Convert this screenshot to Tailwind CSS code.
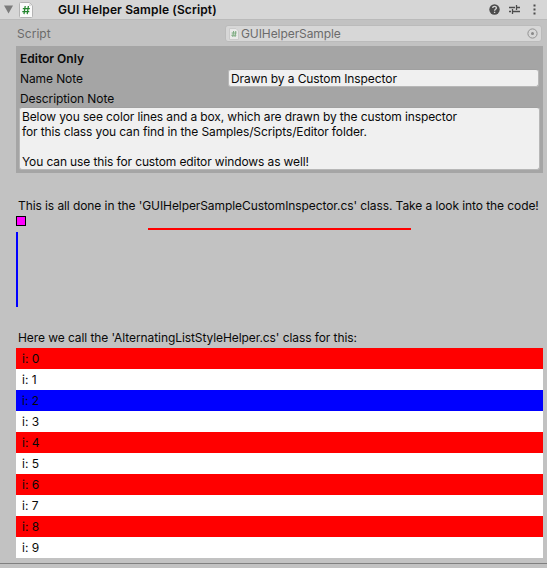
<!DOCTYPE html>
<html lang="en">
<head>
<meta charset="utf-8">
<title>Inspector</title>
<script src="https://cdn.jsdelivr.net/npm/@tailwindcss/browser@4"></script>
</head>
<body class="w-[547px] h-[568px] overflow-hidden bg-[#c2c2c2] font-['Inter',sans-serif] text-[12px] leading-[15px] text-[#090909] flex flex-col whitespace-nowrap">
<header class="h-5 shrink-0 bg-[#d6d6d6] border-b border-[#bababa] flex items-center pl-1 pr-[10px]">
  <svg class="w-[9px] h-[9px]" viewBox="0 0 9 9"><path d="M0 .5h9L4.5 8.5z" fill="#7c7c7c"/></svg>
  <svg class="w-[14px] h-4 ml-[6px]" viewBox="0 0 14 16"><path d="M1.5.5h8.8l3.2 3.2v10.8a1 1 0 0 1-1 1h-11a1 1 0 0 1-1-1v-13a1 1 0 0 1 1-1z" fill="#fbfbfb" stroke="#b4b4b4"/><path d="M10 1v3h3" fill="#ddd"/><path d="M6.2 4 5 12.2M9.4 4 8.2 12.2M3.8 6.6h7M3.3 9.7h7" stroke="#23852d" stroke-width="1.25" fill="none"/></svg>
  <h1 class="ml-[25px] font-semibold tracking-[0.13px]">GUI Helper Sample (Script)</h1>
  <div class="ml-auto flex items-center">
    <svg class="w-[11px] h-[11px]" viewBox="0 0 11 11"><circle cx="5.5" cy="5.5" r="5.2" fill="#4c4c4c"/><path d="M3.7 4.1c0-2.3 3.7-2.2 3.7-.1 0 1.3-1.8 1.3-1.8 2.7M5.6 7.7v1.4" stroke="#d6d6d6" stroke-width="1.35" fill="none"/></svg>
    <svg class="w-[11px] h-[11px] ml-[9px]" viewBox="0 0 11 11"><path d="M0 3.5h6M7.5 3.5H11M7.5 1v5M0 7.5h2M3.5 7.5H11M3.5 5v5" stroke="#4c4c4c" stroke-width="1.3" fill="none"/></svg>
    <svg class="w-[3px] h-[11px] ml-[13px] mr-[1px]" viewBox="0 0 3 11"><path d="M.5.5h2v2h-2zM.5 4.5h2v2h-2zM.5 8.5h2v2h-2z" fill="#4c4c4c"/></svg>
  </div>
</header>
<main class="pl-4 pr-1 flex flex-col">
  <div class="h-[26px] flex items-start pt-[5px] text-[#6b6b6b]">
    <span class="w-[209px] pl-px pt-px tracking-[0.05px]">Script</span>
    <div class="w-[317px] h-[17px] rounded-[3px] border border-[#bbbbbb] bg-[#d7d7d7] flex items-center pl-[3px] pr-[3px]">
      <svg class="w-[10px] h-3" viewBox="0 0 10 12"><path d="M1 .5h6L9.5 3v8.5H.5V.5z" fill="#eaeaea" stroke="#cbcbcb"/><path d="M4.6 3 3.8 9M6.8 3 6 9M2.6 5h5M2.3 7.3h5" stroke="#80ad84" stroke-width="1.1" fill="none"/></svg>
      <span class="ml-[2px] tracking-[-0.08px]">GUIHelperSample</span>
      <svg class="ml-auto w-[11px] h-[11px]" viewBox="0 0 11 11"><circle cx="5.5" cy="5.5" r="4.6" fill="none" stroke="#929292"/><circle cx="5.5" cy="5.5" r="1.5" fill="#888"/></svg>
    </div>
  </div>
  <section class="h-[127px] bg-[#a5a5a5] px-1">
    <h2 class="h-[22px] pt-[5px] font-semibold">Editor Only</h2>
    <div class="h-[21px] flex items-start pt-px">
      <span class="w-[208px] pt-[2px] tracking-[-0.1px]">Name Note</span>
      <div class="w-[311px] h-[18px] rounded-[3px] border border-[#b7b7b7] border-t-[#a0a0a0] bg-[#f0f0f0] pl-[2px] pt-px leading-[15px] tracking-[-0.08px]">Drawn by a Custom Inspector</div>
    </div>
    <div class="h-[18px] pt-[2px] tracking-[-0.08px]">Description Note</div>
    <div class="-mx-px w-[521px] h-[63px] rounded-[3px] border border-[#b7b7b7] border-t-[#a0a0a0] bg-[#f0f0f0] pl-[2px] pt-px whitespace-pre tracking-[-0.12px]">Below you see color lines and a box, which are drawn by the custom inspector
for this class you can find in the Samples/Scripts/Editor folder.

You can use this for custom editor windows as well!</div>
  </section>
  <p class="mt-[25px] h-[18px] pl-[2px] tracking-[-0.085px]">This is all done in the 'GUIHelperSampleCustomInspector.cs' class. Take a look into the code!</p>
  <div class="w-[10px] h-[10px] border border-black bg-[#ff00ff]"></div>
  <div class="mt-[2px] w-[263px] h-[2px] self-center bg-[#ff0000]"></div>
  <div class="mt-[2px] w-[2px] h-[75px] bg-[#0000ff]"></div>
  <p class="mt-[23px] h-[18px] pl-[2px] tracking-[-0.08px]">Here we call the 'AlternatingListStyleHelper.cs' class for this:</p>
  <ul>
    <li class="h-[21px] pt-[3px] pl-[6px] bg-[#ff0000]">i: 0</li>
    <li class="h-[21px] pt-[3px] pl-[6px] bg-white">i: 1</li>
    <li class="h-[21px] pt-[3px] pl-[6px] bg-[#0000ff]">i: 2</li>
    <li class="h-[21px] pt-[3px] pl-[6px] bg-white">i: 3</li>
    <li class="h-[21px] pt-[3px] pl-[6px] bg-[#ff0000]">i: 4</li>
    <li class="h-[21px] pt-[3px] pl-[6px] bg-white">i: 5</li>
    <li class="h-[21px] pt-[3px] pl-[6px] bg-[#ff0000]">i: 6</li>
    <li class="h-[21px] pt-[3px] pl-[6px] bg-white">i: 7</li>
    <li class="h-[21px] pt-[3px] pl-[6px] bg-[#ff0000]">i: 8</li>
    <li class="h-[21px] pt-[3px] pl-[6px] bg-white">i: 9</li>
  </ul>
</main>
<div class="mt-[5px] h-px bg-[#7f7f7f] shrink-0"></div>
</body>
</html>
